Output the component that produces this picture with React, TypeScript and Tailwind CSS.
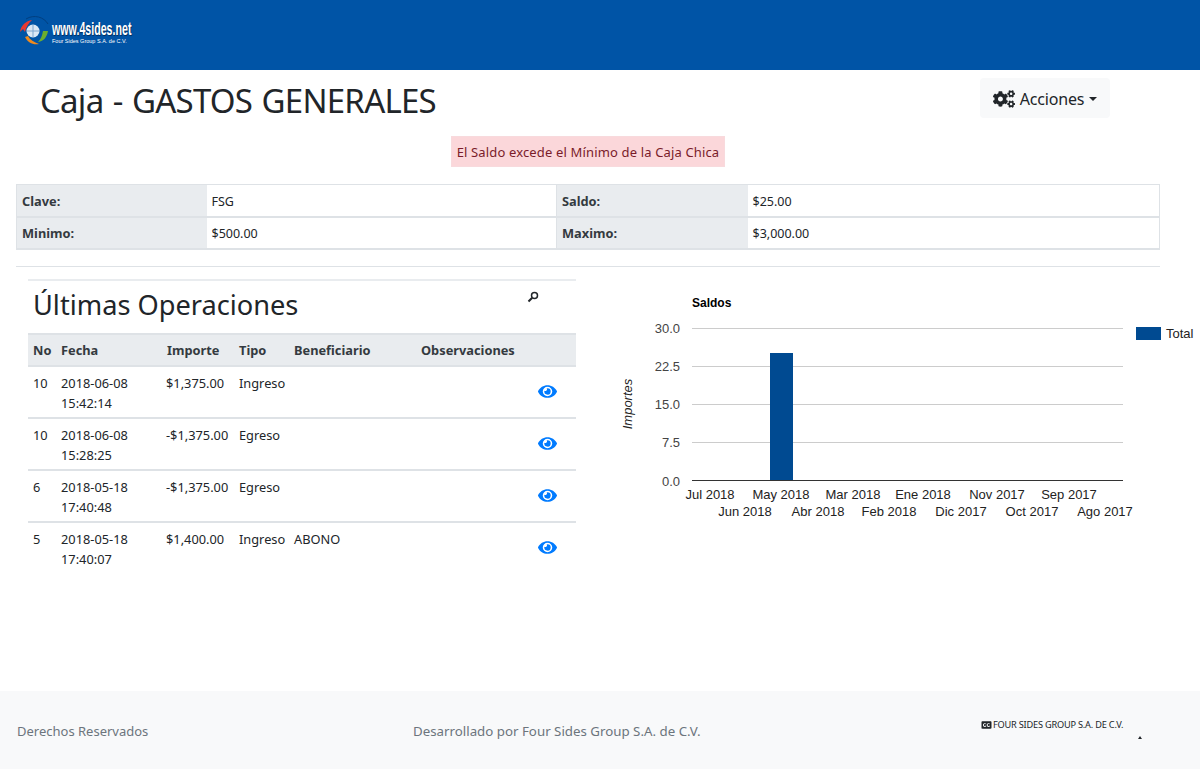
import { FaCogs, FaEye, FaClosedCaptioning } from "react-icons/fa";

const rows = [
  { no: "10", fecha: "2018-06-08", hora: "15:42:14", importe: "$1,375.00", tipo: "Ingreso", ben: "" },
  { no: "10", fecha: "2018-06-08", hora: "15:28:25", importe: "-$1,375.00", tipo: "Egreso", ben: "" },
  { no: "6", fecha: "2018-05-18", hora: "17:40:48", importe: "-$1,375.00", tipo: "Egreso", ben: "" },
  { no: "5", fecha: "2018-05-18", hora: "17:40:07", importe: "$1,400.00", tipo: "Ingreso", ben: "ABONO" },
];

const Logo = () => (
  <div className="flex items-center">
    <svg width="32" height="34" viewBox="0 0 32 34">
      <path d="M8 5 C16 0 26 3 30 10" fill="none" stroke="#003f80" strokeWidth="1" />
      <path d="M2 18 C3 11 8 7 14 6 C10 10 8 13 7 18 L5 15 Z" fill="#e8382f" />
      <path d="M7 23 C10 29 15 31 21 30 C16 28 12 26 10 22 Z" fill="#f08a1d" />
      <path d="M30 17 C29 23 26 27 20 28 C23 25 24 22 25 17 Z" fill="#6cae2f" />
      <circle cx="15" cy="17" r="6.5" fill="#dbe8f5" />
      <path d="M9 17 H21 M15 11 V23" stroke="#7ea6cf" strokeWidth="1" />
    </svg>
    <div className="flex flex-col ml-[2px] mt-[2px] text-white font-['Liberation_Sans',sans-serif]">
      <span className="text-[19px] font-bold h-[19px] leading-[19px] whitespace-nowrap scale-x-[0.56] origin-left [text-shadow:1px_1px_1px_#002d5c]">www.4sides.net</span>
      <span className="text-[5.5px] h-[7px] leading-[7px] whitespace-nowrap">Four Sides Group S.A. de C.V.</span>
    </div>
  </div>
);

const Saldos = () => {
  const grid = [328, 366, 404, 442];
  const labelsY = [
    { t: "30.0", y: 333 },
    { t: "22.5", y: 371 },
    { t: "15.0", y: 409 },
    { t: "7.5", y: 447 },
    { t: "0.0", y: 486 },
  ];
  const top = [
    { t: "Jul 2018", x: 710 },
    { t: "May 2018", x: 781 },
    { t: "Mar 2018", x: 853 },
    { t: "Ene 2018", x: 923 },
    { t: "Nov 2017", x: 997 },
    { t: "Sep 2017", x: 1069 },
  ];
  const bottom = [
    { t: "Jun 2018", x: 745 },
    { t: "Abr 2018", x: 818 },
    { t: "Feb 2018", x: 889 },
    { t: "Dic 2017", x: 961 },
    { t: "Oct 2017", x: 1032 },
    { t: "Ago 2017", x: 1105 },
  ];
  return (
    <svg width="600" height="240" viewBox="600 285 600 240" className="font-['Liberation_Sans',sans-serif]">
      <text x="692" y="307" fontSize="12" fontWeight="700" fill="#000">Saldos</text>
      {grid.map((y) => (
        <rect key={y} x="692" y={y} width="431" height="1" fill="#cccccc" />
      ))}
      <rect x="770" y="353" width="23" height="128" fill="#004a91" />
      <rect x="692" y="480" width="431" height="1" fill="#333333" />
      {labelsY.map((l) => (
        <text key={l.t} x="680" y={l.y} fontSize="13" textAnchor="end" fill="#444444">{l.t}</text>
      ))}
      {top.map((l) => (
        <text key={l.t} x={l.x} y="499" fontSize="13" textAnchor="middle" fill="#222222">{l.t}</text>
      ))}
      {bottom.map((l) => (
        <text key={l.t} x={l.x} y="516" fontSize="13" textAnchor="middle" fill="#222222">{l.t}</text>
      ))}
      <text transform="translate(632 404) rotate(-90)" fontSize="13" fontStyle="italic" textAnchor="middle" fill="#222222">Importes</text>
      <rect x="1136" y="327" width="25" height="13" fill="#004a91" />
      <text x="1166" y="338" fontSize="13" fill="#222222">Total</text>
    </svg>
  );
};

export default function App() {
  return (
    <div className="w-[1200px] h-[769px] flex flex-col overflow-hidden bg-white text-[#212529] font-['Noto_Sans',sans-serif]">
      <nav className="h-[70px] bg-[#0054a6] flex items-center pl-[18px] pb-[8px] shrink-0">
        <Logo />
      </nav>

      <main className="flex-1 px-[16px] min-h-0">
        <div className="flex items-start justify-between pl-[24px] pr-[74px] h-[66px]">
          <h1 className="text-[33px] leading-[60px] mt-[1px] tracking-[-0.75px] [word-spacing:1.5px]">Caja - GASTOS GENERALES</h1>
          <button className="mt-[8px] w-[130px] h-[40px] rounded bg-[#f8f9fa] flex items-center justify-center gap-[5px] text-[16px] pt-[1px]">
            <FaCogs className="w-[22px] h-[18px]" />
            <span className="tracking-[-0.2px]">Acciones</span>
            <span className="border-x-[4px] border-x-transparent border-t-[4px] border-t-[#212529]" />
          </button>
        </div>

        <div className="flex justify-center pr-[24px]">
          <div className="h-[31px] w-[274px] bg-[#fbd7da] border border-[#f8dadd] text-[#7a1c2a] text-[13px] tracking-[0.15px] pt-[3px] flex items-center justify-center whitespace-nowrap">
            El Saldo excede el Mínimo de la Caja Chica
          </div>
        </div>

        <table className="mt-[17px] w-[1144px] table-fixed border border-[#dee2e6] text-[12.5px]">
          <colgroup>
            <col className="w-[190px]" />
            <col className="w-[350px]" />
            <col className="w-[191px]" />
            <col />
          </colgroup>
          <tbody>
            <tr className="h-[32px]">
              <th className="border-b-2 border-[#dee2e6] bg-[#e9ecef] text-left text-[12.8px] font-bold px-[5px] pt-[3px] text-[#343a40]">Clave:</th>
              <td className="border-b-2 border-[#dee2e6] px-[5px] pt-[4px]">FSG</td>
              <th className="border-b-2 border-l border-[#dee2e6] bg-[#e9ecef] text-left text-[12.8px] font-bold px-[5px] pt-[3px] text-[#343a40]">Saldo:</th>
              <td className="border-b-2 border-[#dee2e6] px-[5px] pt-[4px]">$25.00</td>
            </tr>
            <tr className="h-[32px]">
              <th className="border-b-2 border-[#dee2e6] bg-[#e9ecef] text-left text-[12.8px] font-bold px-[5px] pt-[3px] text-[#343a40]">Minimo:</th>
              <td className="border-b-2 border-[#dee2e6] px-[5px] pt-[3px]">$500.00</td>
              <th className="border-b-2 border-l border-[#dee2e6] bg-[#e9ecef] text-left text-[12.8px] font-bold px-[5px] pt-[3px] text-[#343a40]">Maximo:</th>
              <td className="border-b-2 border-[#dee2e6] px-[5px] pt-[3px]">$3,000.00</td>
            </tr>
          </tbody>
        </table>

        <hr className="mt-[16px] w-[1144px] border-t border-[#dee2e6]" />

        <div className="flex mt-[12px] items-start">
          <section className="ml-[12px] w-[548px] border-t-2 border-[#e9ecef]">
            <div className="flex justify-between h-[52px]">
              <h2 className="pl-[5px] text-[27.2px] leading-[48px]">Últimas Operaciones</h2>
              <svg className="mt-[10px] mr-[37px]" width="12" height="12" viewBox="0 0 12 12" fill="none" stroke="#212529">
                <circle cx="7.5" cy="4.5" r="3" strokeWidth="1.5" />
                <path d="M5.2 6.8 L1.5 10.5" strokeWidth="2" />
              </svg>
            </div>
            <table className="w-full table-fixed border-collapse text-[12.8px]">
              <colgroup>
                <col className="w-[28px]" />
                <col className="w-[105px]" />
                <col className="w-[73px]" />
                <col className="w-[55px]" />
                <col className="w-[127px]" />
                <col />
                <col className="w-[56px]" />
              </colgroup>
              <thead>
                <tr className="h-[32px] bg-[#e9ecef] border-y-2 border-[#dee2e6] text-left text-[#343a40]">
                  <th className="pl-[5px] pt-[2px] font-bold">No</th>
                  <th className="pl-[5px] pt-[2px] font-bold">Fecha</th>
                  <th className="pl-[6px] pt-[2px] font-bold">Importe</th>
                  <th className="pl-[5px] pt-[2px] font-bold">Tipo</th>
                  <th className="pl-[5px] pt-[2px] font-bold">Beneficiario</th>
                  <th className="pl-[5px] pt-[2px] font-bold whitespace-nowrap">Observaciones</th>
                  <th />
                </tr>
              </thead>
              <tbody>
                {rows.map((r) => (
                  <tr key={r.hora} className="h-[52px] border-b-2 border-[#dee2e6] last:border-b-0 align-top leading-[20px]">
                    <td className="pl-[5px] pt-[6px]">{r.no}</td>
                    <td className="pl-[5px] pt-[6px]">
                      {r.fecha}
                      <br />
                      {r.hora}
                    </td>
                    <td className="pl-[5px] pt-[6px] whitespace-nowrap">{r.importe}</td>
                    <td className="pl-[5px] pt-[6px]">{r.tipo}</td>
                    <td className="pl-[5px] pt-[6px]">{r.ben}</td>
                    <td />
                    <td className="align-middle pl-[18px] pb-[1px]">
                      <FaEye className="w-[19px] h-[19px] text-[#007bff]" />
                    </td>
                  </tr>
                ))}
              </tbody>
            </table>
          </section>
          <div className="flex-1 flex justify-end">
            <div className="mr-[-16px] mt-[6px]">
              <Saldos />
            </div>
          </div>
        </div>
      </main>

      <footer className="h-[78px] shrink-0 bg-[#f8f9fa] flex items-center pl-[17px] pt-[3px] text-[13.3px] text-[#6c757d] relative">
        <span className="w-[396px] text-[13px]">Derechos Reservados</span>
        <span className="w-[568px]">Desarrollado por Four Sides Group S.A. de C.V.</span>
        <span className="flex items-center gap-[1px] -mt-[13px] text-[9.2px] text-[#212529] whitespace-nowrap tracking-[-0.2px]">
          <FaClosedCaptioning className="w-[11px] h-[10px]" />
          FOUR SIDES GROUP S.A. DE C.V.
        </span>
        <span className="absolute left-[1138px] top-[45px] border-x-[2px] border-x-transparent border-b-[3px] border-b-[#212529]" />
      </footer>
    </div>
  );
}
